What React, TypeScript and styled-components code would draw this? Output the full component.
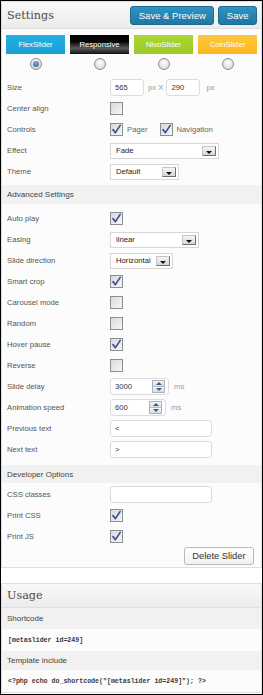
import styled, { createGlobalStyle } from 'styled-components';

const GlobalStyle = createGlobalStyle`
  html, body {
    margin: 0;
    padding: 0;
    background: #fff;
  }
  body {
    font-family: "Liberation Sans", Arial, sans-serif;
  }
`;

const Frame = styled.div`
  width: 263px;
  height: 695px;
  box-sizing: border-box;
  border: 1px solid #000;
  background: #fff;
  overflow: hidden;
`;

const Panel = styled.section<{ $gap?: number }>`
  border: 1px solid #dfdfdf;
  background: #fcfcfc;
  margin-top: ${p => p.$gap || 0}px;
`;

const PanelHead = styled.div<{ $h: number }>`
  height: ${p => p.$h}px;
  display: flex;
  align-items: center;
  justify-content: space-between;
  padding: 0 4px 0 5px;
  background: linear-gradient(#f9f9f9, #ececec);
  border-bottom: 1px solid #dfdfdf;
`;

const PanelTitle = styled.h3`
  margin: 0;
  font: 400 11.2px "DejaVu Serif", Georgia, serif;
  color: #4a4a4a;
`;

const HeadButtons = styled.div`
  display: flex;
  gap: 4px;
`;

const BlueButton = styled.button`
  height: 19px;
  padding: 0 7.5px;
  border: 1px solid #1d6a90;
  border-radius: 3px;
  background: linear-gradient(#2f93c4, #21779f);
  color: #fff;
  font: 9.5px "Liberation Sans", Arial, sans-serif;
`;

const TypeGrid = styled.div`
  display: grid;
  grid-template-columns: repeat(4, 1fr);
  column-gap: 5px;
  padding: 6px 4px 0;
`;

const TypeCell = styled.div`
  display: flex;
  flex-direction: column;
  align-items: center;
`;

const Tile = styled.div<{ $bg: string }>`
  width: 100%;
  height: 19px;
  display: flex;
  align-items: center;
  justify-content: center;
  background: ${p => p.$bg};
  color: #fff;
  font-size: 7.7px;
`;

const Radio = styled.span<{ $on?: boolean }>`
  position: relative;
  margin-top: 4px;
  width: 12px;
  height: 12px;
  box-sizing: border-box;
  border-radius: 50%;
  border: 1px solid #8c8c8c;
  background: radial-gradient(circle at 50% 35%, #ffffff, #d2d2d2);
  &::after {
    content: '';
    display: ${p => (p.$on ? 'block' : 'none')};
    position: absolute;
    inset: 2px;
    border-radius: 50%;
    background: radial-gradient(circle at 45% 35%, #7fb6e6, #1d4f86);
  }
`;

const Rows = styled.div<{ $top: number; $bottom?: number }>`
  padding-top: ${p => p.$top}px;
  padding-bottom: ${p => p.$bottom || 0}px;
`;

const Row = styled.div`
  display: grid;
  grid-template-columns: 104px 1fr;
  align-items: center;
  height: 21px;
  padding: 0 4px;
`;

const Label = styled.div`
  font-size: 7.7px;
  color: #555;
  padding-left: 1px;
`;

const Controls = styled.div`
  display: flex;
  align-items: center;
`;

const Unit = styled.span<{ $l: number; $r?: number }>`
  font-size: 7.7px;
  color: #9a9a9a;
  margin-left: ${p => p.$l}px;
  margin-right: ${p => p.$r || 0}px;
`;

const Inline = styled.span<{ $l: number; $r?: number }>`
  font-size: 7.7px;
  color: #666;
  margin-left: ${p => p.$l}px;
  margin-right: ${p => p.$r || 0}px;
`;

const Field = styled.div<{ $w: number }>`
  position: relative;
  width: ${p => p.$w}px;
  height: 17px;
  box-sizing: border-box;
  border: 1px solid #dcdcdc;
  border-radius: 3px;
  background: #fff;
  display: flex;
  align-items: center;
  padding: 0 4px;
  font-size: 7.7px;
  color: #333;
`;

const Value = styled.span`
  flex: 1;
`;

const Box = styled.span`
  width: 13px;
  height: 13px;
  box-sizing: border-box;
  border: 1px solid #8e8e8e;
  background: linear-gradient(135deg, #d9d9d9, #f7f7f7);
  display: flex;
  align-items: center;
  justify-content: center;
`;

const Select = styled.div<{ $w: number }>`
  width: ${p => p.$w}px;
  height: 16px;
  box-sizing: border-box;
  border: 1px solid #d6d6d6;
  background: #fff;
  display: flex;
  align-items: center;
  justify-content: space-between;
  padding: 0 2px 0 5px;
  font-size: 7.7px;
  color: #222;
`;

const DropButton = styled.span`
  width: 14px;
  height: 10px;
  box-sizing: border-box;
  border: 1px solid #707070;
  border-top-color: #c4c4c4;
  border-left-color: #c4c4c4;
  background: linear-gradient(#f6f6f6, #d6d6d6);
  display: flex;
  align-items: flex-end;
  justify-content: center;
  &::after {
    content: '';
    border-left: 3px solid transparent;
    border-right: 3px solid transparent;
    border-top: 3px solid #111;
    margin-bottom: 1px;
  }
`;

const Spin = styled.span`
  width: 13px;
  height: 13px;
  box-sizing: border-box;
  border: 1px solid #a8b4c4;
  display: flex;
  flex-direction: column;
  margin-right: -1px;
`;

const SpinHalf = styled.span<{ $up?: boolean }>`
  flex: 1;
  display: flex;
  align-items: center;
  justify-content: center;
  background: linear-gradient(#f3f6fa, #d3dce8);
  border-top: ${p => (p.$up ? 'none' : '1px solid #b4bfcd')};
  &::after {
    content: '';
    border-left: 3px solid transparent;
    border-right: 3px solid transparent;
    ${p => (p.$up ? 'border-bottom: 3px solid #4d5b6e;' : 'border-top: 3px solid #4d5b6e;')}
  }
`;

const Band = styled.div<{ $h: number; $mt?: number; $mb?: number }>`
  height: ${p => p.$h}px;
  margin-top: ${p => p.$mt || 0}px;
  margin-bottom: ${p => p.$mb || 0}px;
  display: flex;
  align-items: center;
  padding: 0 5px;
  background: #f1f1f1;
  font-size: 8px;
  color: #444;
`;

const ButtonBar = styled.div`
  display: flex;
  justify-content: flex-end;
  padding: 0 7px 2px 0;
`;

const GhostButton = styled.button`
  height: 18px;
  padding: 0 7.5px;
  border: 1px solid #b9b9b9;
  border-radius: 3px;
  background: linear-gradient(#ffffff, #f1f1f1);
  color: #333;
  font: 9.3px "Liberation Sans", Arial, sans-serif;
`;

const Code = styled.div<{ $h: number }>`
  height: ${p => p.$h}px;
  display: flex;
  align-items: center;
  padding: 0 6px;
  font: 700 6.6px "Liberation Mono", "Courier New", monospace;
  color: #3a3a3a;
  white-space: pre;
`;

const Check = ({ on }: { on?: boolean }) => (
  <Box>
    {on && (
      <svg width="11" height="11" viewBox="0 0 11 11">
        <path d="M2 5.6 L4.4 8.6 L9.2 1.4" fill="none" stroke="#3c4f9e" strokeWidth="1.7" strokeLinecap="round" strokeLinejoin="round" />
      </svg>
    )}
  </Box>
);

const Spinner = ({ value, w }: { value: string; w: number }) => (
  <Field $w={w}>
    <Value>{value}</Value>
    <Spin>
      <SpinHalf $up />
      <SpinHalf />
    </Spin>
  </Field>
);

const Dropdown = ({ value, w }: { value: string; w: number }) => (
  <Select $w={w}>
    <span>{value}</span>
    <DropButton />
  </Select>
);

const types = [
  { name: 'FlexSlider', bg: 'linear-gradient(#24afe3, #1a9fd4)', on: true },
  { name: 'Responsive', bg: 'linear-gradient(#000 0%, #050505 35%, #5a5a5a 70%, #111 100%)' },
  { name: 'NivoSlider', bg: 'linear-gradient(#aad532, #9ec92a)' },
  { name: 'CoinSlider', bg: 'linear-gradient(#ffc93d, #fbb51f)' },
];

const App = () => (
  <Frame>
    <GlobalStyle />
    <Panel>
      <PanelHead $h={26}>
        <PanelTitle>Settings</PanelTitle>
        <HeadButtons>
          <BlueButton>Save &amp; Preview</BlueButton>
          <BlueButton>Save</BlueButton>
        </HeadButtons>
      </PanelHead>

      <TypeGrid>
        {types.map(t => (
          <TypeCell key={t.name}>
            <Tile $bg={t.bg}>{t.name}</Tile>
            <Radio $on={t.on} />
          </TypeCell>
        ))}
      </TypeGrid>

      <Rows $top={7}>
        <Row>
          <Label>Size</Label>
          <Controls>
            <Field $w={34}><Value>565</Value></Field>
            <Unit $l={4} $r={3}>px X</Unit>
            <Field $w={34}><Value>290</Value></Field>
            <Unit $l={6}>px</Unit>
          </Controls>
        </Row>
        <Row>
          <Label>Center align</Label>
          <Controls><Check /></Controls>
        </Row>
        <Row>
          <Label>Controls</Label>
          <Controls>
            <Check on />
            <Inline $l={4} $r={12}>Pager</Inline>
            <Check on />
            <Inline $l={4}>Navigation</Inline>
          </Controls>
        </Row>
        <Row>
          <Label>Effect</Label>
          <Controls><Dropdown value="Fade" w={109} /></Controls>
        </Row>
        <Row>
          <Label>Theme</Label>
          <Controls><Dropdown value="Default" w={69} /></Controls>
        </Row>
      </Rows>

      <Band $h={19} $mt={3} $mb={4}>Advanced Settings</Band>

      <Rows $top={0}>
        <Row>
          <Label>Auto play</Label>
          <Controls><Check on /></Controls>
        </Row>
        <Row>
          <Label>Easing</Label>
          <Controls><Dropdown value="linear" w={89} /></Controls>
        </Row>
        <Row>
          <Label>Slide direction</Label>
          <Controls><Dropdown value="Horizontal" w={63} /></Controls>
        </Row>
        <Row>
          <Label>Smart crop</Label>
          <Controls><Check on /></Controls>
        </Row>
        <Row>
          <Label>Carousel mode</Label>
          <Controls><Check /></Controls>
        </Row>
        <Row>
          <Label>Random</Label>
          <Controls><Check /></Controls>
        </Row>
        <Row>
          <Label>Hover pause</Label>
          <Controls><Check on /></Controls>
        </Row>
        <Row>
          <Label>Reverse</Label>
          <Controls><Check /></Controls>
        </Row>
        <Row>
          <Label>Slide delay</Label>
          <Controls>
            <Spinner value="3000" w={59} />
            <Unit $l={5}>ms</Unit>
          </Controls>
        </Row>
        <Row>
          <Label>Animation speed</Label>
          <Controls>
            <Spinner value="600" w={56} />
            <Unit $l={5}>ms</Unit>
          </Controls>
        </Row>
        <Row>
          <Label>Previous text</Label>
          <Controls><Field $w={102}><Value>&lt;</Value></Field></Controls>
        </Row>
        <Row>
          <Label>Next text</Label>
          <Controls><Field $w={102}><Value>&gt;</Value></Field></Controls>
        </Row>
      </Rows>

      <Band $h={18} $mt={5} $mb={1}>Developer Options</Band>

      <Rows $top={0}>
        <Row>
          <Label>CSS classes</Label>
          <Controls><Field $w={102} /></Controls>
        </Row>
        <Row>
          <Label>Print CSS</Label>
          <Controls><Check on /></Controls>
        </Row>
        <Row>
          <Label>Print JS</Label>
          <Controls><Check on /></Controls>
        </Row>
      </Rows>

      <ButtonBar>
        <GhostButton>Delete Slider</GhostButton>
      </ButtonBar>
    </Panel>

    <Panel $gap={15}>
      <PanelHead $h={23}>
        <PanelTitle>Usage</PanelTitle>
      </PanelHead>
      <Band $h={21}>Shortcode</Band>
      <Code $h={22}>[metaslider id=249]</Code>
      <Band $h={19}>Template include</Band>
      <Code $h={22}>{'<?php echo do_shortcode("[metaslider id=249]"); ?>'}</Code>
    </Panel>
  </Frame>
);

export default App;
